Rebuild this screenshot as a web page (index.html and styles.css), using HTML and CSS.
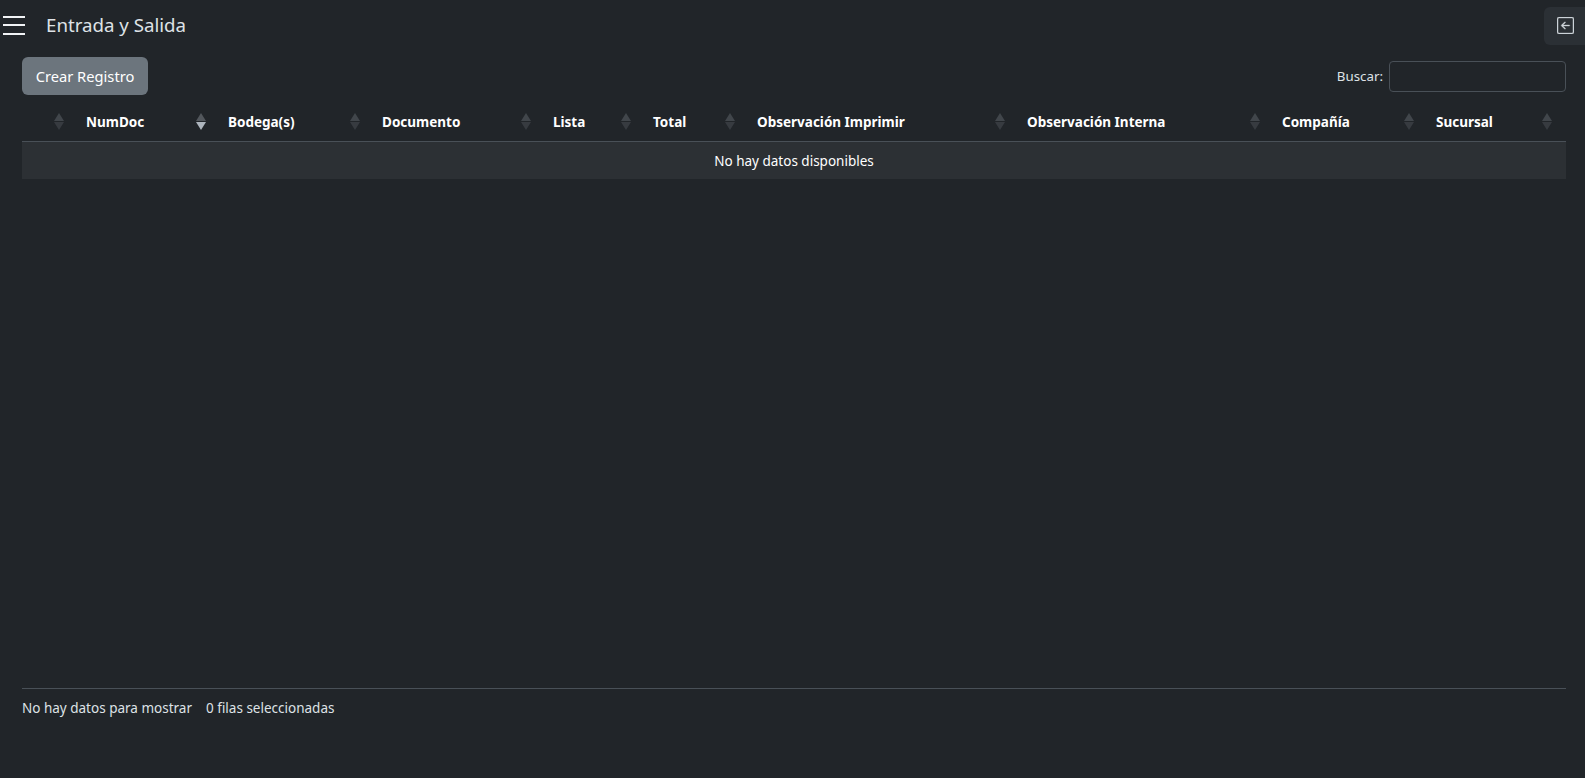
FILE: index.html
```html
<!DOCTYPE html>
<html lang="es">
<head>
  <meta charset="UTF-8">
  <meta name="viewport" content="width=device-width, initial-scale=1.0">
  <title>Entrada y Salida</title>
  <link rel="stylesheet" href="styles.css">
</head>

<body>
  <header class="topbar">
    <button class="menu-btn" aria-label="Menu">
      <span></span><span></span><span></span>
    </button>
    <h1>Entrada y Salida</h1>
    <button class="side-btn" aria-label="Cerrar">
      <svg width="17" height="17" viewBox="0 0 16 16" fill="currentColor" stroke="currentColor" stroke-width="0.3">
        <path d="M15 2a1 1 0 0 0-1-1H2a1 1 0 0 0-1 1v12a1 1 0 0 0 1 1h12a1 1 0 0 0 1-1V2zM0 2a2 2 0 0 1 2-2h12a2 2 0 0 1 2 2v12a2 2 0 0 1-2 2H2a2 2 0 0 1-2-2V2zm11.500 5.500a.5.5 0 0 1 0 1H5.707l2.147 2.146a.5.5 0 0 1-.708.708l-3-3a.5.5 0 0 1 0-.708l3-3a.5.5 0 1 1 .708.708L5.707 7.500H11.500z"/>
      </svg>
    </button>
  </header>

  <main class="content">
    <div class="toolbar">
      <button class="btn-create">Crear Registro</button>
      <label class="search">Buscar: <input type="search"></label>
    </div>

    <table class="grid">
      <colgroup>
        <col class="c1"><col class="c2"><col class="c3"><col class="c4"><col class="c5">
        <col class="c6"><col class="c7"><col class="c8"><col class="c9"><col class="c10">
      </colgroup>
      <thead>
        <tr>
          <th><div class="th-in"><span></span><span class="sort"><i class="up"></i><i class="down"></i></span></div></th>
          <th><div class="th-in"><span>NumDoc</span><span class="sort active"><i class="up"></i><i class="down"></i></span></div></th>
          <th><div class="th-in"><span>Bodega(s)</span><span class="sort"><i class="up"></i><i class="down"></i></span></div></th>
          <th><div class="th-in"><span>Documento</span><span class="sort"><i class="up"></i><i class="down"></i></span></div></th>
          <th><div class="th-in"><span>Lista</span><span class="sort"><i class="up"></i><i class="down"></i></span></div></th>
          <th><div class="th-in"><span>Total</span><span class="sort"><i class="up"></i><i class="down"></i></span></div></th>
          <th><div class="th-in"><span>Observación Imprimir</span><span class="sort"><i class="up"></i><i class="down"></i></span></div></th>
          <th><div class="th-in"><span>Observación Interna</span><span class="sort"><i class="up"></i><i class="down"></i></span></div></th>
          <th><div class="th-in"><span>Compañía</span><span class="sort"><i class="up"></i><i class="down"></i></span></div></th>
          <th><div class="th-in"><span>Sucursal</span><span class="sort"><i class="up"></i><i class="down"></i></span></div></th>
        </tr>
      </thead>
      <tbody>
        <tr>
          <td colspan="10">No hay datos disponibles</td>
        </tr>
      </tbody>
    </table>

    <footer class="table-foot">
      <span>No hay datos para mostrar</span>
      <span>0 filas seleccionadas</span>
    </footer>
  </main>
</body>
</html>
```

FILE: styles.css
```css
* {
  box-sizing: border-box;
}

html, body {
  height: 100%;
}

body {
  margin: 0;
  display: flex;
  flex-direction: column;
  background: #212529;
  color: #dee2e6;
  font-family: "Noto Sans", "Open Sans", sans-serif;
  font-size: 13.5px;
  overflow: hidden;
}

button {
  font-family: inherit;
  border: none;
  cursor: pointer;
}

.topbar {
  display: flex;
  align-items: flex-start;
  height: 57px;
  padding-top: 7px;
}

.menu-btn {
  display: flex;
  flex-direction: column;
  gap: 6.5px;
  width: 22px;
  margin: 8.5px 0 0 3px;
  padding: 0;
  background: none;
}

.menu-btn span {
  display: block;
  height: 2px;
  background: #f1f3f5;
}

.topbar h1 {
  flex: 1;
  margin: 0 0 0 21px;
  font-size: 18.7px;
  font-weight: 400;
  line-height: 36px;
  color: #dee2e6;
}

.side-btn {
  display: flex;
  align-items: center;
  justify-content: center;
  width: 41px;
  height: 38px;
  padding: 0 0 2px 2px;
  background: #2b3035;
  color: #ced4da;
  border-radius: 6px 0 0 6px;
}

.content {
  flex: 1;
  display: flex;
  flex-direction: column;
  padding: 0 19px 0 22px;
}

.toolbar {
  display: flex;
  align-items: center;
  justify-content: space-between;
  height: 38px;
}

.btn-create {
  height: 38px;
  width: 126px;
  padding: 0;
  background: #6c757d;
  color: #fff;
  font-size: 14.7px;
  border-radius: 6px;
}

.search {
  display: flex;
  align-items: center;
  gap: 6px;
  font-size: 13.3px;
}

.search input {
  width: 177px;
  height: 31px;
  background: #212529;
  border: 1px solid #495057;
  border-radius: 4px;
  color: #dee2e6;
  outline: none;
}

.grid {
  width: 100%;
  margin-top: 7px;
  border-collapse: collapse;
  table-layout: fixed;
}

.c1 { width: 54px; }
.c2 { width: 142px; }
.c3 { width: 154px; }
.c4 { width: 171px; }
.c5 { width: 100px; }
.c6 { width: 104px; }
.c7 { width: 270px; }
.c8 { width: 255px; }
.c9 { width: 154px; }
.c10 { width: 140px; }

.grid th {
  height: 39px;
  padding: 1px 12px 0 10px;
  border-bottom: 1px solid #495057;
  color: #fff;
  font-weight: 700;
  text-align: left;
}

.grid th:last-child {
  padding-right: 14px;
}

.th-in {
  display: flex;
  align-items: center;
  justify-content: space-between;
}

.sort {
  display: flex;
  flex-direction: column;
  gap: 1px;
}

.sort i {
  display: block;
  width: 0;
  height: 0;
  border-left: 5.5px solid transparent;
  border-right: 5.5px solid transparent;
}

.sort .up {
  border-bottom: 8px solid #41464b;
}

.sort .down {
  border-top: 8px solid #373b40;
}

.sort.active .up {
  border-bottom-color: #52575c;
}

.sort.active .down {
  border-top-color: #adb5bd;
}

.grid td {
  height: 38px;
  padding: 2px 10px 0;
  background: #2c3034;
  color: #fff;
  text-align: center;
}

.table-foot {
  display: flex;
  gap: 14px;
  margin-top: auto;
  margin-bottom: 61px;
  padding-top: 10px;
  border-top: 1px solid #495057;
  line-height: 18px;
}
```
